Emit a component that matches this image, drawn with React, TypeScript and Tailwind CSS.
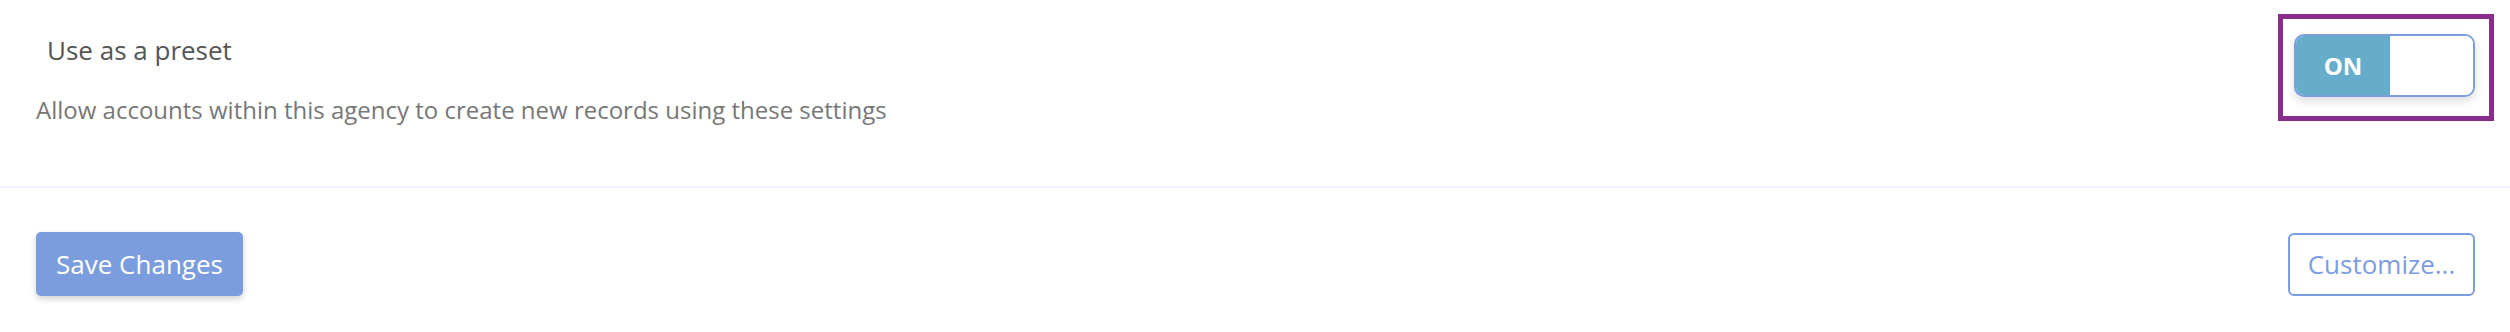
import React, { useState } from "react";

const font = { fontFamily: '"Open Sans", "Noto Sans", sans-serif' };

function PresetToggle() {
  const [on, setOn] = useState(true);

  return (
    <div className="relative mt-[2px]">
      {/* highlight frame around the switch */}
      <span className="pointer-events-none absolute -left-[16px] -right-[19px] -top-[20px] -bottom-[24px] border-[5px] border-[#8a2c8c]" />
      <button
        onClick={() => setOn(!on)}
        className="flex h-[63px] w-[181px] overflow-hidden rounded-[10px] border-2 border-[#7c9ddf] bg-white shadow-[0_4px_8px_rgba(0,0,0,0.14)]"
      >
        <span
          className={
            on
              ? "flex h-full w-[94px] items-center justify-center bg-[#66adcb] text-[24px] font-bold text-white"
              : "flex h-full w-[94px] items-center justify-center bg-white text-[24px] font-bold text-white"
          }
        >
          ON
        </span>
        <span className="h-full flex-1 bg-white" />
      </button>
    </div>
  );
}

export default function App() {
  return (
    <div className="min-h-[332px] w-full bg-white" style={font}>
      <div className="flex items-start justify-between pl-[36px] pr-[35px] pt-[32px] pb-[59px]">
        <div className="flex flex-col gap-[25px]">
          <h3 className="pl-[11px] text-[26px] leading-[36px] font-normal text-[#555555]">
            Use as a preset
          </h3>
          <p className="text-[24px] leading-[34px] text-[#777777]">
            Allow accounts within this agency to create new records using these settings
          </p>
        </div>
        <PresetToggle />
      </div>

      <div className="h-[2px] w-full bg-[#eef1fc]" />

      <div className="flex items-center justify-between pl-[36px] pr-[35px] pt-[44px] pb-[36px]">
        <button className="h-[64px] w-[207px] rounded-[5px] bg-[#7b9ddd] text-[26px] text-white shadow-[0_3px_6px_rgba(0,0,0,0.18)]">
          Save Changes
        </button>
        <button className="h-[63px] w-[187px] rounded-[6px] border-2 border-[#7c9ddf] bg-white text-[26px] text-[#7c9ddf]">
          Customize...
        </button>
      </div>
    </div>
  );
}
